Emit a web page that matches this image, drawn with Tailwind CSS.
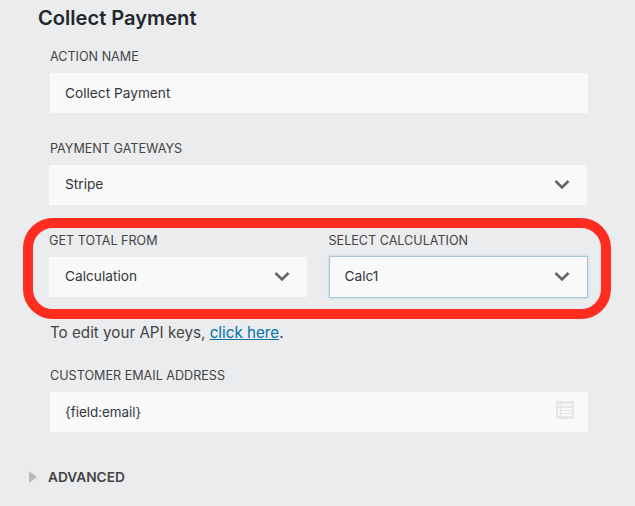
<!DOCTYPE html>
<html lang="en">
 <head>
  <meta charset="utf-8"/>
  <meta content="width=device-width, initial-scale=1.0" name="viewport"/>
  <title>Collect Payment</title>
  <script src="https://cdn.jsdelivr.net/npm/@tailwindcss/browser@4"></script>
 </head>
 <body class="bg-[#ebecee] font-['Inter','Noto_Sans',sans-serif] text-[#32373c] w-[635px] h-[506px] overflow-hidden">
  <div class="relative h-[506px]">
   <h1 class="absolute left-[38px] top-[6px] text-[20.1px] leading-[24px] font-semibold text-[#23282d]">Collect Payment</h1>

   <div class="flex flex-col pl-[50px] pr-[47px] pt-[49px]">
    <!-- Action name -->
    <label class="text-[12.6px] leading-[16px] text-[#444]">ACTION NAME</label>
    <div class="mt-[8px] h-[40px] w-[538px] bg-[#f9f9f9] flex items-center pl-[15px] text-[13.7px]">Collect Payment</div>

    <!-- Gateways -->
    <label class="mt-[28px] text-[12.6px] leading-[16px] text-[#444]">PAYMENT GATEWAYS</label>
    <div class="mt-[8px] -ml-px h-[40px] w-[538px] bg-[#f9f9f9] flex items-center justify-between pl-[16px] pr-[17px] text-[13.7px]">
     <span class="-mt-[1px]">Stripe</span>
     <svg class="w-[16px] h-[11px] -mt-[2px]" viewBox="0 0 16 11" fill="none" stroke="#666" stroke-width="2.6"><path d="M1.5 2l6.5 6.5L14.5 2"/></svg>
    </div>

    <!-- Total row -->
    <div class="mt-[28px] -ml-px flex">
     <div class="w-[258px]">
      <label class="block text-[12.6px] leading-[16px] text-[#444]">GET TOTAL FROM</label>
      <div class="mt-[8px] h-[40px] bg-[#f9f9f9] flex items-center justify-between pl-[16px] pr-[17px] text-[13.7px]">
       <span class="-mt-[1px]">Calculation</span>
       <svg class="w-[16px] h-[11px] -mt-[2px]" viewBox="0 0 16 11" fill="none" stroke="#666" stroke-width="2.6"><path d="M1.5 2l6.5 6.5L14.5 2"/></svg>
      </div>
     </div>
     <div class="ml-[22px] w-[260px]">
      <label class="block text-[12.6px] leading-[16px] text-[#444]">SELECT CALCULATION</label>
      <div class="mt-[7px] h-[42px] bg-[#f9f9f9] border border-[#a5c8da] shadow-[0_0_2px_rgba(30,140,190,0.35)] flex items-center justify-between pl-[15px] pr-[17px] text-[13.7px]">
       <span class="-mt-[1px]">Calc1</span>
       <svg class="w-[16px] h-[11px] -mt-[2px]" viewBox="0 0 16 11" fill="none" stroke="#666" stroke-width="2.6"><path d="M1.5 2l6.5 6.5L14.5 2"/></svg>
      </div>
     </div>
    </div>

    <p class="mt-[25px] text-[15.2px] leading-[20px] text-[#444]">To edit your API keys, <a class="text-[#0073aa] underline" href="#">click here</a>.</p>

    <!-- Email -->
    <label class="mt-[25px] text-[12.6px] leading-[16px] text-[#444]">CUSTOMER EMAIL ADDRESS</label>
    <div class="mt-[8px] h-[40px] w-[538px] bg-[#f9f9f9] flex items-center justify-between pl-[15px] pr-[14px] text-[13.4px]">
     <span>{field:email}</span>
     <svg class="w-[18px] h-[18px] -mt-[4px]" viewBox="0 0 18 18">
      <rect width="18" height="18" fill="#e6e6e6"/>
      <g fill="#f9f9f9">
       <rect x="2" y="3" width="2" height="2"/><rect x="5" y="3" width="11" height="2"/>
       <rect x="2" y="7" width="2" height="2"/><rect x="5" y="7" width="11" height="2"/>
       <rect x="2" y="10" width="2" height="2"/><rect x="5" y="10" width="11" height="2"/>
       <rect x="2" y="13" width="2" height="2"/><rect x="5" y="13" width="11" height="2"/>
      </g>
     </svg>
    </div>

    <!-- Advanced -->
    <div class="mt-[36px] -ml-[21px] flex items-center">
     <span class="w-0 h-0 border-y-[6px] border-y-transparent border-l-[8px] border-l-[#b9b9b9]"></span>
     <span class="ml-[11px] text-[13.7px] leading-[18px] font-semibold text-[#444]">ADVANCED</span>
    </div>
   </div>

   <!-- red highlight drawn over the screenshot -->
   <div class="absolute left-[23px] top-[218px] w-[588px] h-[101px] border-[10px] border-[#ff2d20] rounded-[30px]"></div>
  </div>
 </body>
</html>
